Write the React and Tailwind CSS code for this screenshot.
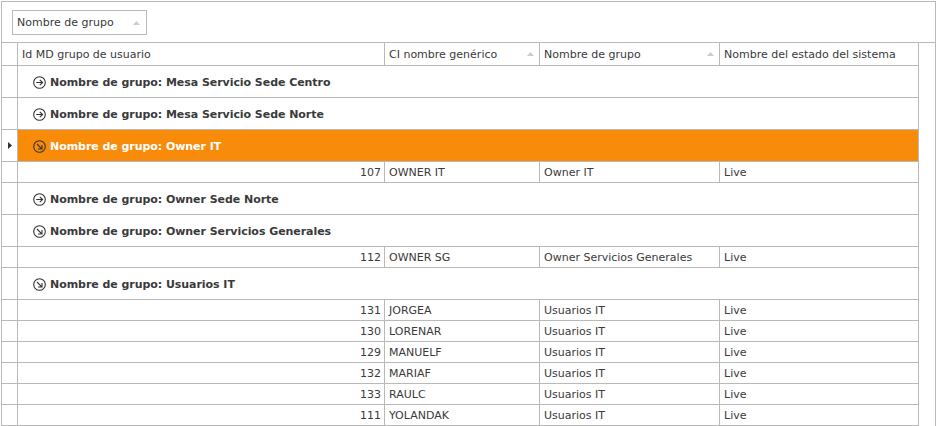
import React from 'react'

const groups = [
  { name: 'Mesa Servicio Sede Centro', open: false, rows: [] },
  { name: 'Mesa Servicio Sede Norte', open: false, rows: [] },
  {
    name: 'Owner IT',
    open: true,
    selected: true,
    rows: [{ id: 107, ci: 'OWNER IT', group: 'Owner IT' }],
  },
  { name: 'Owner Sede Norte', open: false, rows: [] },
  {
    name: 'Owner Servicios Generales',
    open: true,
    rows: [{ id: 112, ci: 'OWNER SG', group: 'Owner Servicios Generales' }],
  },
  {
    name: 'Usuarios IT',
    open: true,
    rows: [
      { id: 131, ci: 'JORGEA', group: 'Usuarios IT' },
      { id: 130, ci: 'LORENAR', group: 'Usuarios IT' },
      { id: 129, ci: 'MANUELF', group: 'Usuarios IT' },
      { id: 132, ci: 'MARIAF', group: 'Usuarios IT' },
      { id: 133, ci: 'RAULC', group: 'Usuarios IT' },
      { id: 111, ci: 'YOLANDAK', group: 'Usuarios IT' },
    ],
  },
]

const SortArrow = () => (
  <svg width="7" height="4" viewBox="0 0 7 4" className="shrink-0">
    <path d="M3.5 0 L7 4 L0 4 Z" fill="#cccccc" />
  </svg>
)

const GroupIcon = ({ open }) => (
  <svg width="13" height="13" viewBox="0 0 13 13" fill="none" stroke="#333333" strokeWidth="1.1" className="shrink-0">
    <circle cx="6.5" cy="6.5" r="5.8" />
    {open ? (
      <path d="M4 4 L8.8 8.8 M9 5 L9 9 L5 9" />
    ) : (
      <path d="M3.2 6.5 L9.6 6.5 M6.8 3.8 L9.6 6.5 L6.8 9.2" />
    )}
  </svg>
)

const HeaderCell = ({ className, label, sorted }) => (
  <div className={`flex items-center justify-between border-r border-[#b9b9b9] pl-1 pr-[5px] ${className}`}>
    <span className="pt-[2px]">{label}</span>
    {sorted && <SortArrow />}
  </div>
)

const GroupRow = ({ group }) => (
  <div className="flex h-[32px] border-b border-[#b9b9b9]">
    <div className="flex w-[16px] shrink-0 items-center justify-center border-r border-[#b9b9b9]">
      {group.selected && (
        <svg width="4" height="7" viewBox="0 0 4 7">
          <path d="M0 0 L4 3.5 L0 7 Z" fill="#333333" />
        </svg>
      )}
    </div>
    <div
      className={`flex w-[901px] items-center gap-[4px] border-r border-[#b9b9b9] pl-[15px] pt-[2px] font-bold tracking-[-0.05px] ${
        group.selected ? 'bg-[#f98b0a] text-white' : ''
      }`}
    >
      <GroupIcon open={group.open} />
      <span className="pt-[2px]">Nombre de grupo: {group.name}</span>
    </div>
  </div>
)

const DataRow = ({ row }) => (
  <div className="flex h-[21px] items-stretch border-b border-[#b9b9b9]">
    <div className="w-[16px] shrink-0 border-r border-[#b9b9b9]" />
    <div className="flex w-[367px] items-center justify-end border-r border-[#b9b9b9] pr-[3px] pt-[2px]">{row.id}</div>
    <div className="flex w-[155px] items-center border-r border-[#b9b9b9] pl-1 pt-[2px]">{row.ci}</div>
    <div className="flex w-[180px] items-center border-r border-[#b9b9b9] pl-1 pt-[2px]">{row.group}</div>
    <div className="flex w-[199px] items-center border-r border-[#b9b9b9] pl-1 pt-[2px]">Live</div>
  </div>
)

export default function App() {
  return (
    <div className="h-[426px] w-[947px] overflow-hidden bg-white pl-px pt-px font-['DejaVu_Sans',sans-serif] text-[11px] text-[#3a3a3a]">
      <div className="h-[440px] w-[935px] border border-[#b9b9b9]">
        <div className="flex h-[41px] items-start border-b border-[#b9b9b9] pl-[10px] pt-2">
          <div className="flex h-[25px] w-[135px] items-center justify-between border border-[#b9b9b9] pl-1 pr-[6px]">
            <span className="pt-[2px]">Nombre de grupo</span>
            <SortArrow />
          </div>
        </div>
        <div className="w-[917px]">
          <div className="flex h-[23px] border-b border-[#b9b9b9]">
            <div className="w-[16px] shrink-0 border-r border-[#b9b9b9]" />
            <HeaderCell className="w-[367px]" label="Id MD grupo de usuario" />
            <HeaderCell className="w-[155px]" label="CI nombre genérico" sorted />
            <HeaderCell className="w-[180px]" label="Nombre de grupo" sorted />
            <HeaderCell className="w-[199px]" label="Nombre del estado del sistema" />
          </div>
          {groups.map((group) => (
            <div key={group.name}>
              <GroupRow group={group} />
              {group.rows.map((row) => (
                <DataRow key={row.id} row={row} />
              ))}
            </div>
          ))}
        </div>
      </div>
    </div>
  )
}
